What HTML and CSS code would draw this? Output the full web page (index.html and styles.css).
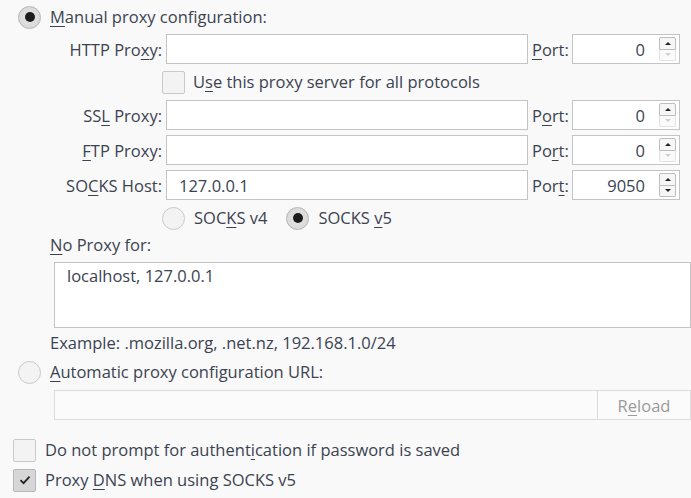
FILE: index.html
```html
<!DOCTYPE html>
<html>
<head>
<meta charset="utf-8">
<link rel="stylesheet" href="styles.css">
</head>
<body>
<div class="page">
  <div class="opt top-opt">
    <span class="radio checked"></span>
    <span class="txt"><u>M</u>anual proxy configuration:</span>
  </div>

  <div class="grid">
    <span class="lbl"><span>HTTP Pro<u>x</u>y:</span></span>
    <span class="field"></span>
    <span class="plbl"><span><u>P</u>ort:</span></span>
    <span class="port"><span class="num">0</span><span class="spin"><span class="up on"></span><span class="down"></span></span></span>

    <div class="opt sub">
      <span class="check"></span>
      <span class="txt">U<u>s</u>e this proxy server for all protocols</span>
    </div>

    <span class="lbl"><span>SS<u>L</u> Proxy:</span></span>
    <span class="field"></span>
    <span class="plbl"><span>P<u>o</u>rt:</span></span>
    <span class="port"><span class="num">0</span><span class="spin"><span class="up on"></span><span class="down"></span></span></span>

    <span class="lbl"><span><u>F</u>TP Proxy:</span></span>
    <span class="field"></span>
    <span class="plbl"><span>Po<u>r</u>t:</span></span>
    <span class="port"><span class="num">0</span><span class="spin"><span class="up on"></span><span class="down"></span></span></span>

    <span class="lbl"><span>SO<u>C</u>KS Host:</span></span>
    <span class="field"><span class="val">127.0.0.1</span></span>
    <span class="plbl"><span>Por<u>t</u>:</span></span>
    <span class="port"><span class="num">9050</span><span class="spin"><span class="up on"></span><span class="down on"></span></span></span>

    <div class="opt sub">
      <span class="radio"></span>
      <span class="txt">SOC<u>K</u>S v4</span>
      <span class="radio checked second"></span>
      <span class="txt">SOCKS <u>v</u>5</span>
    </div>
  </div>

  <div class="noproxy"><u>N</u>o Proxy for:</div>
  <div class="area"><span class="val">localhost, 127.0.0.1</span></div>
  <div class="example">Example: .mozilla.org, .net.nz, 192.168.1.0/24</div>

  <div class="opt auto-opt">
    <span class="radio"></span>
    <span class="txt"><u>A</u>utomatic proxy configuration URL:</span>
  </div>
  <div class="url">
    <span class="url-field"></span>
    <span class="reload"><span>R<u>e</u>load</span></span>
  </div>

  <div class="opt bottom-opt first">
    <span class="check"></span>
    <span class="txt">Do not prompt for authent<u>i</u>cation if password is saved</span>
  </div>
  <div class="opt bottom-opt">
    <span class="check checked"><svg width="12" height="10" viewBox="0 0 12 10"><path d="M1.5 5.2 L4.6 8.2 L10.5 1.6" fill="none" stroke="#222" stroke-width="1.8"/></svg></span>
    <span class="txt">Proxy <u>D</u>NS when using SOCKS v5</span>
  </div>
</div>
</body>
</html>
```

FILE: styles.css
```css
html, body {
  margin: 0;
  padding: 0;
  background: #f9f9f9;
}
body {
  font-family: "Open Sans", "DejaVu Sans", sans-serif;
  font-size: 16.5px;
  color: #3b4351;
  width: 691px;
  height: 498px;
  overflow: hidden;
}
u {
  text-decoration: underline;
  text-underline-offset: 3px;
  text-decoration-thickness: 1px;
}
.page {
  display: flex;
  flex-direction: column;
}
.opt {
  display: flex;
  align-items: center;
  height: 24px;
}
.txt {
  line-height: 22px;
  white-space: nowrap;
}
.radio {
  box-sizing: border-box;
  width: 23px;
  height: 23px;
  border-radius: 50%;
  border: 1px solid #c9c9c9;
  background: #f3f3f3;
  margin-right: 9px;
  flex: none;
  display: flex;
  align-items: center;
  justify-content: center;
}
.radio.checked {
  background: radial-gradient(circle, #e6e6e6 0%, #d4d4d4 100%);
  border-color: #b5b5b5;
}
.radio.checked::after {
  content: "";
  width: 10px;
  height: 10px;
  border-radius: 50%;
  background: #1c1c1c;
}
.check {
  box-sizing: border-box;
  width: 23px;
  height: 23px;
  border-radius: 2px;
  border: 1px solid #c9c9c9;
  background: #f3f3f3;
  margin-right: 8px;
  flex: none;
  display: flex;
  align-items: center;
  justify-content: center;
}
.check.checked {
  background: #d6d6d6;
  border-color: #b8b8b8;
}
.top-opt {
  margin-top: 5px;
  padding-left: 18px;
}
.grid {
  margin-top: 5px;
  display: grid;
  grid-template-columns: 162px 362px 36px 108px;
  grid-template-rows: 30px 26px 30px 30px 30px 26px;
  column-gap: 4px;
  row-gap: 5px;
}
.grid .sub {
  grid-column: 2 / -1;
  margin-left: -4px;
  height: 26px;
}
.second {
  margin-left: 19px;
}
.lbl, .plbl {
  display: flex;
  align-items: center;
  white-space: nowrap;
}
.lbl {
  justify-content: flex-end;
}
.field, .port {
  box-sizing: border-box;
  border: 1px solid #c4c4c4;
  background: #fff;
  display: flex;
  align-items: center;
}
.val {
  padding-left: 12px;
}
.port {
  justify-content: flex-end;
  padding-right: 3px;
}
.num {
  margin-right: 14px;
}
.spin {
  display: flex;
  flex-direction: column;
  width: 17px;
  height: 24px;
}
.up, .down {
  box-sizing: border-box;
  flex: 1;
  border: 1px solid #e2e2e2;
  background: #fafafa;
  display: flex;
  align-items: center;
  justify-content: center;
}
.up {
  border-radius: 2px 2px 0 0;
}
.down {
  border-radius: 0 0 2px 2px;
  border-top: none;
}
.up.on, .down.on {
  border-color: #bdbdbd;
  background: #f6f6f6;
}
.up::after, .down::after {
  content: "";
  width: 0;
  height: 0;
  border-left: 3px solid transparent;
  border-right: 3px solid transparent;
}
.up::after {
  border-bottom: 3px solid #cfcfcf;
}
.down::after {
  border-top: 3px solid #cfcfcf;
}
.up.on::after {
  border-bottom-color: #222;
}
.down.on::after {
  border-top-color: #222;
}
.noproxy {
  margin-top: 3px;
  padding-left: 50px;
  line-height: 22px;
}
.area {
  box-sizing: border-box;
  margin: 6px 0 0 54px;
  width: 637px;
  height: 66px;
  border: 1px solid #c4c4c4;
  background: #fff;
  padding-top: 2px;
  line-height: 22px;
}
.example {
  padding-left: 50px;
  margin-top: 4px;
  line-height: 22px;
}
.auto-opt {
  margin-top: 6px;
  padding-left: 18px;
}
.url {
  box-sizing: border-box;
  margin: 6px 0 0 54px;
  width: 637px;
  height: 30px;
  border: 1px solid #dcdcdc;
  background: #fbfbfb;
  display: flex;
}
.url-field {
  flex: 1;
}
.reload {
  width: 92px;
  border-left: 1px solid #dcdcdc;
  color: #9a9a9a;
  display: flex;
  align-items: center;
  justify-content: center;
}
.bottom-opt {
  padding-left: 13px;
  margin-top: 6px;
}
.bottom-opt.first {
  margin-top: 18px;
}
.bottom-opt .check {
  margin-right: 9px;
}
```
